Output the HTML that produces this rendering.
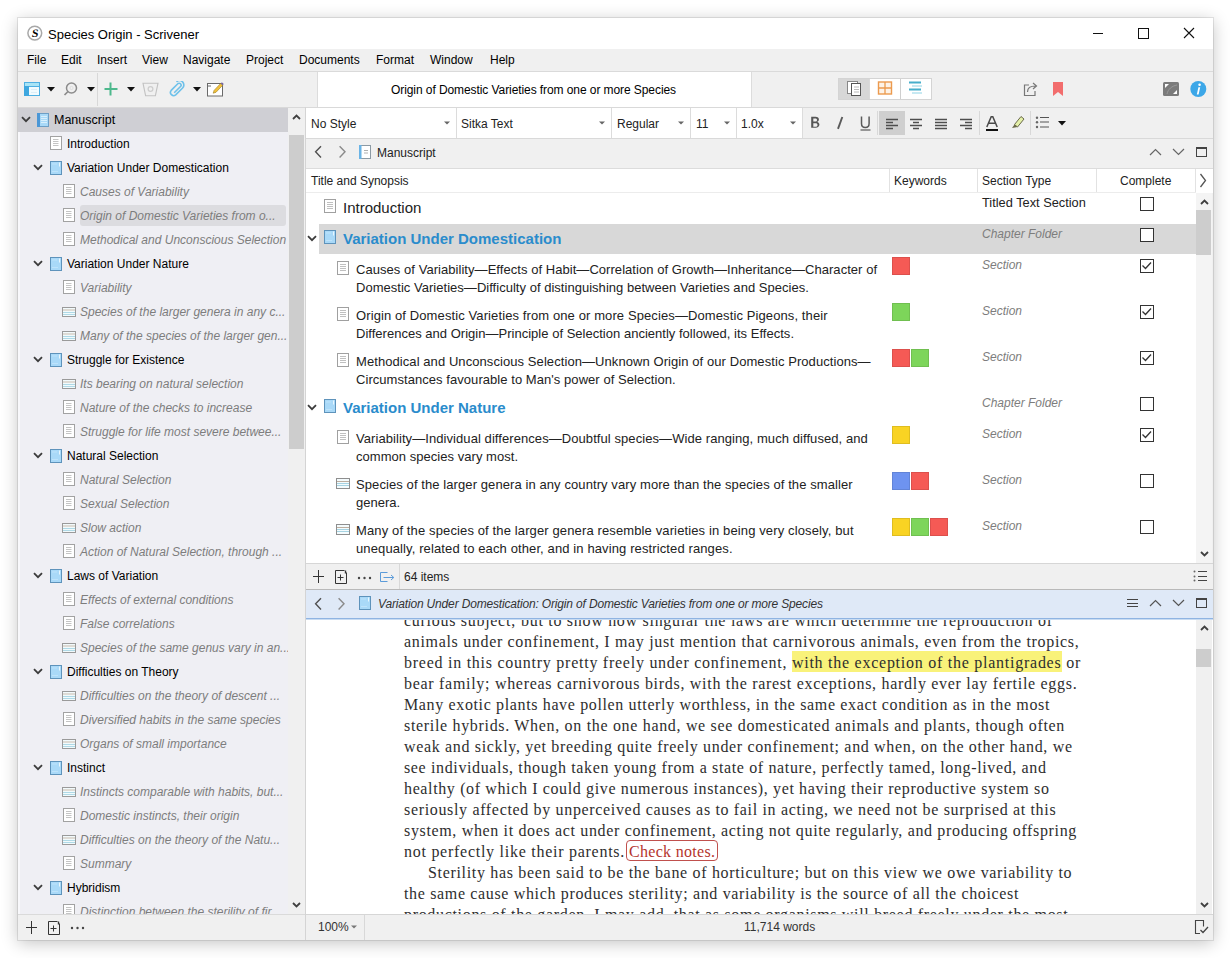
<!DOCTYPE html><html><head><meta charset="utf-8"><style>
html,body{margin:0;padding:0;width:1231px;height:958px;overflow:hidden;background:#fff;}
body{position:relative;font-family:"Liberation Sans",sans-serif;font-size:12px;color:#000;}
.t{position:absolute;white-space:pre;line-height:16px;}
.i{font-style:italic;color:#7a7a7a;}
</style></head><body>
<div style="position:absolute;left:18px;top:18px;width:1195px;height:922px;background:#f0f0f0;box-shadow:0 0 0 1px rgba(0,0,0,0.09),0 3px 16px rgba(0,0,0,0.24);"></div>
<div style="position:absolute;left:18px;top:18px;width:1195px;height:31px;background:#fff;"></div>
<svg style="position:absolute;left:27px;top:25px;" width="16" height="16" viewBox="0 0 16 16"><circle cx="7.8" cy="8.1" r="6.9" fill="#fff" stroke="#a8a8a8" stroke-width="1.5"/><text x="7.8" y="12" text-anchor="middle" font-family="Liberation Serif" font-weight="bold" font-size="11.5" fill="#000" transform="skewX(-8) translate(1.5 0)">S</text></svg>
<div class="t" style="left:48px;top:27px;font-size:13px;color:#000;">Species Origin - Scrivener</div>
<div style="position:absolute;left:1093px;top:33px;width:10px;height:1px;background:#111;"></div>
<div style="position:absolute;left:1138px;top:28px;width:9px;height:9px;border:1px solid #111;"></div>
<svg style="position:absolute;left:1183px;top:27px;" width="12" height="12" viewBox="0 0 12 12"><path d="M1 1L11 11M11 1L1 11" stroke="#111" stroke-width="1.1"/></svg>
<div style="position:absolute;left:18px;top:49px;width:1195px;height:22px;background:#f0f0f0;"></div>
<div class="t" style="left:27px;top:52px;">File</div>
<div class="t" style="left:61px;top:52px;">Edit</div>
<div class="t" style="left:97px;top:52px;">Insert</div>
<div class="t" style="left:142px;top:52px;">View</div>
<div class="t" style="left:183px;top:52px;">Navigate</div>
<div class="t" style="left:246px;top:52px;">Project</div>
<div class="t" style="left:299px;top:52px;">Documents</div>
<div class="t" style="left:376px;top:52px;">Format</div>
<div class="t" style="left:430px;top:52px;">Window</div>
<div class="t" style="left:490px;top:52px;">Help</div>
<div style="position:absolute;left:18px;top:71px;width:1195px;height:1px;background:#dadada;"></div>
<div style="position:absolute;left:18px;top:72px;width:1195px;height:35px;background:#f0f0f0;"></div>
<div style="position:absolute;left:97px;top:73px;width:1px;height:33px;background:#d8d8d8;"></div>
<div style="position:absolute;left:317px;top:72px;width:433px;height:35px;background:#fff;border-left:1px solid #dcdcdc;border-right:1px solid #dcdcdc;"></div>
<div class="t" style="left:391px;top:82px;letter-spacing:-0.08px;">Origin of Domestic Varieties from one or more Species</div>
<div style="position:absolute;left:18px;top:107px;width:1195px;height:1px;background:#d9d9d9;"></div>
<svg style="position:absolute;left:24px;top:82px;" width="16" height="14" viewBox="0 0 16 14"><rect x="0.5" y="0.5" width="15" height="13" fill="#f2fbfe" stroke="#4fb0e2"/><rect x="1" y="1" width="14" height="3" fill="#a8e4f6"/><path d="M0.5 4.5h15" stroke="#4fb0e2"/><rect x="0" y="4" width="5" height="10" fill="#3ea7df"/><path d="M7 7.5h6M7 10.5h6" stroke="#dbeef7"/></svg>
<svg style="position:absolute;left:47px;top:87px;" width="8" height="5" viewBox="0 0 8 5"><path d="M0 0h8l-4 4.5z" fill="#111"/></svg>
<svg style="position:absolute;left:63px;top:81px;" width="16" height="16" viewBox="0 0 16 16"><circle cx="8.5" cy="7" r="5" fill="none" stroke="#8c8c8c" stroke-width="1.5"/><path d="M5 10.5L1.5 14" stroke="#8c8c8c" stroke-width="1.7"/><circle cx="8.5" cy="7" r="1.6" fill="none" stroke="#d8d8d8" stroke-width="0.8"/></svg>
<svg style="position:absolute;left:87px;top:87px;" width="8" height="5" viewBox="0 0 8 5"><path d="M0 0h8l-4 4.5z" fill="#111"/></svg>
<svg style="position:absolute;left:104px;top:82px;" width="14" height="14" viewBox="0 0 14 14"><path d="M6.5 0.5v13M0.5 7h13" stroke="#4db88c" stroke-width="2"/></svg>
<svg style="position:absolute;left:127px;top:87px;" width="8" height="5" viewBox="0 0 8 5"><path d="M0 0h8l-4 4.5z" fill="#111"/></svg>
<svg style="position:absolute;left:142px;top:82px;" width="17" height="15" viewBox="0 0 17 15"><path d="M1 1.2h15l-2.6 12.5H3.6z" fill="none" stroke="#c2c2c2" stroke-width="1.1"/><circle cx="8.5" cy="7" r="2.4" fill="none" stroke="#cdcdcd" stroke-width="1.2"/></svg>
<svg style="position:absolute;left:169px;top:81px;" width="17" height="16" viewBox="0 0 17 16"><path d="M5.2 11.8l6.3-6.3a1.9 1.9 0 0 0-2.7-2.7L2.2 9.4a3.2 3.2 0 0 0 4.5 4.5l6.9-6.9a4.3 4.3 0 0 0-6.1-6.1" fill="none" stroke="#6ec1ea" stroke-width="1.6"/></svg>
<svg style="position:absolute;left:193px;top:87px;" width="8" height="5" viewBox="0 0 8 5"><path d="M0 0h8l-4 4.5z" fill="#111"/></svg>
<svg style="position:absolute;left:207px;top:81px;" width="18" height="16" viewBox="0 0 18 16"><rect x="0.5" y="2.5" width="15" height="12.5" fill="#fff" stroke="#6a6a6a"/><path d="M1 5h3" stroke="#6a6a6a" stroke-width="1"/><path d="M6.2 12.2l0.9-2.8 6.6-7 1.9 1.9-6.6 7z" fill="#f3c13a" stroke="#9a7a1a" stroke-width="0.6"/><path d="M13.7 2.4l1.2-1.2 1.9 1.9-1.2 1.2z" fill="#7a6aa0"/></svg>
<div style="position:absolute;left:838px;top:78px;width:94px;height:22px;background:#fff;border:1px solid #d4d4d4;box-sizing:border-box;"></div>
<div style="position:absolute;left:839px;top:79px;width:30px;height:20px;background:#d7d7d7;"></div>
<div style="position:absolute;left:869px;top:79px;width:1px;height:20px;background:#dadada;"></div>
<div style="position:absolute;left:900px;top:79px;width:1px;height:20px;background:#cfcfcf;"></div>
<svg style="position:absolute;left:847px;top:81px;" width="15" height="15" viewBox="0 0 15 15"><rect x="0.5" y="0.5" width="10" height="12" fill="#fff" stroke="#888"/><rect x="4.5" y="2.5" width="9" height="12" fill="#fff" stroke="#555"/><path d="M7 6h5M7 8.5h5M7 11h5" stroke="#bbb"/></svg>
<svg style="position:absolute;left:877px;top:81px;" width="16" height="14" viewBox="0 0 16 14"><rect x="1.5" y="1" width="13" height="12" fill="#fdf3e8" stroke="#ec9a4e" stroke-width="1.4"/><path d="M8 1v12M1.5 7h13" stroke="#ec9a4e" stroke-width="1.3"/></svg>
<svg style="position:absolute;left:908px;top:81px;" width="16" height="14" viewBox="0 0 16 14"><path d="M1 1.5h12M1 8.5h12" stroke="#46aecb" stroke-width="1.8"/><path d="M4 5h10M4 12h10" stroke="#8fd3e6" stroke-width="1.2"/></svg>
<svg style="position:absolute;left:1023px;top:80px;" width="17" height="17" viewBox="0 0 17 17"><path d="M6 5H1.5v10.5H12V11" fill="none" stroke="#777" stroke-width="1.2"/><path d="M4.5 12c0-4 2.5-6 8-6M10 3l3.5 3-3.5 3" fill="none" stroke="#777" stroke-width="1.2"/></svg>
<svg style="position:absolute;left:1053px;top:82px;" width="11" height="15" viewBox="0 0 11 15"><path d="M0 0h10v14l-5-4-5 4z" fill="#f26d6d"/></svg>
<svg style="position:absolute;left:1163px;top:82px;" width="16" height="14" viewBox="0 0 16 14"><rect x="0" y="0" width="16" height="14" rx="1.5" fill="#7b7b7b"/><path d="M2 2h4l-4 4z" fill="#fff"/><path d="M14 12h-4l4-4z" fill="#fff"/><path d="M4 12c1-5 5-8 10-9" fill="none" stroke="#999" stroke-width="1"/></svg>
<svg style="position:absolute;left:1190px;top:81px;" width="17" height="17" viewBox="0 0 17 17"><circle cx="8.3" cy="8" r="8" fill="#3ca7e8"/><circle cx="9.6" cy="3.8" r="1.3" fill="#fff"/><path d="M8.4 6.2h1.8l-1.6 7.2H6.8z" fill="#fff"/></svg>
<div style="position:absolute;left:18px;top:108px;width:270px;height:806px;background:#efeff4;"></div>
<div style="position:absolute;left:18px;top:108px;width:2px;height:806px;background:#f8f8fb;"></div>
<div style="position:absolute;left:18px;top:108px;width:270px;height:806px;overflow:hidden;">
<div style="position:absolute;left:0px;top:-1px;width:270px;height:25px;background:#cfcfd4;"></div>
<svg style="position:absolute;left:3px;top:8px;" width="10" height="7" viewBox="0 0 10 7"><path d="M1 1.2l4 4 4-4" fill="none" stroke="#3c3c3c" stroke-width="1.8"/></svg>
<svg style="position:absolute;left:19px;top:5px;" width="13" height="14" viewBox="0 0 13 14"><rect x="0.5" y="0.5" width="11" height="13" fill="#a9d9f7" stroke="#6e9fc5"/><rect x="0" y="0" width="3" height="14" fill="#4b97d6"/><path d="M4 3.5h6M4 5.5h6M4 7.5h6M4 9.5h6" stroke="#d8effc"/></svg>
<div class="t" style="left:36px;top:4px;font-size:12.5px;">Manuscript</div>
<svg style="position:absolute;left:32px;top:28px;" width="13" height="14" viewBox="0 0 13 14"><rect x="0.5" y="0.5" width="11" height="13" fill="#fff" stroke="#a2a2a2"/><path d="M3 3.5h5.5M3 5.5h5.5M3 7.5h5.5M3 9.5h5.5" stroke="#c4c4c4" stroke-width="1"/></svg>
<div class="t" style="left:49px;top:28px;">Introduction</div>
<svg style="position:absolute;left:15px;top:56px;" width="10" height="7" viewBox="0 0 10 7"><path d="M1 1.2l4 4 4-4" fill="none" stroke="#3c3c3c" stroke-width="1.8"/></svg>
<svg style="position:absolute;left:32px;top:53px;" width="13" height="15" viewBox="0 0 13 15"><rect x="0.5" y="0.5" width="11" height="13" fill="#a9d9f8" stroke="#5e93bb"/><path d="M9.5 1.5v4" stroke="#e8f6fe" stroke-width="1"/><path d="M2 3h5M2 10.5h6" stroke="#c4e6fb" stroke-width="0.8"/></svg>
<div class="t" style="left:49px;top:52px;">Variation Under Domestication</div>
<svg style="position:absolute;left:45px;top:76px;" width="13" height="14" viewBox="0 0 13 14"><rect x="0.5" y="0.5" width="11" height="13" fill="#fff" stroke="#a2a2a2"/><path d="M3 3.5h5.5M3 5.5h5.5M3 7.5h5.5M3 9.5h5.5" stroke="#c4c4c4" stroke-width="1"/></svg>
<div class="t" style="left:62px;top:76px;font-style:italic;color:#7d7d7d;">Causes of Variability</div>
<div style="position:absolute;left:62px;top:97px;width:206px;height:21px;background:#dcdce0;border-radius:3px;"></div>
<svg style="position:absolute;left:45px;top:100px;" width="13" height="14" viewBox="0 0 13 14"><rect x="0.5" y="0.5" width="11" height="13" fill="#fff" stroke="#a2a2a2"/><path d="M3 3.5h5.5M3 5.5h5.5M3 7.5h5.5M3 9.5h5.5" stroke="#c4c4c4" stroke-width="1"/></svg>
<div class="t" style="left:62px;top:100px;font-style:italic;color:#7d7d7d;">Origin of Domestic Varieties from o...</div>
<svg style="position:absolute;left:45px;top:124px;" width="13" height="14" viewBox="0 0 13 14"><rect x="0.5" y="0.5" width="11" height="13" fill="#fff" stroke="#a2a2a2"/><path d="M3 3.5h5.5M3 5.5h5.5M3 7.5h5.5M3 9.5h5.5" stroke="#c4c4c4" stroke-width="1"/></svg>
<div class="t" style="left:62px;top:124px;font-style:italic;color:#7d7d7d;">Methodical and Unconscious Selection</div>
<svg style="position:absolute;left:15px;top:152px;" width="10" height="7" viewBox="0 0 10 7"><path d="M1 1.2l4 4 4-4" fill="none" stroke="#3c3c3c" stroke-width="1.8"/></svg>
<svg style="position:absolute;left:32px;top:149px;" width="13" height="15" viewBox="0 0 13 15"><rect x="0.5" y="0.5" width="11" height="13" fill="#a9d9f8" stroke="#5e93bb"/><path d="M9.5 1.5v4" stroke="#e8f6fe" stroke-width="1"/><path d="M2 3h5M2 10.5h6" stroke="#c4e6fb" stroke-width="0.8"/></svg>
<div class="t" style="left:49px;top:148px;">Variation Under Nature</div>
<svg style="position:absolute;left:45px;top:172px;" width="13" height="14" viewBox="0 0 13 14"><rect x="0.5" y="0.5" width="11" height="13" fill="#fff" stroke="#a2a2a2"/><path d="M3 3.5h5.5M3 5.5h5.5M3 7.5h5.5M3 9.5h5.5" stroke="#c4c4c4" stroke-width="1"/></svg>
<div class="t" style="left:62px;top:172px;font-style:italic;color:#7d7d7d;">Variability</div>
<svg style="position:absolute;left:44px;top:199px;" width="14" height="10" viewBox="0 0 14 10"><rect x="0.5" y="0.5" width="13" height="9" fill="#f2fafc" stroke="#9a9a9a"/><path d="M1 3h12" stroke="#c9bbad"/><path d="M1 5.5h12M1 7.5h12" stroke="#afd9e6"/></svg>
<div class="t" style="left:62px;top:196px;font-style:italic;color:#7d7d7d;">Species of the larger genera in any c...</div>
<svg style="position:absolute;left:44px;top:223px;" width="14" height="10" viewBox="0 0 14 10"><rect x="0.5" y="0.5" width="13" height="9" fill="#f2fafc" stroke="#9a9a9a"/><path d="M1 3h12" stroke="#c9bbad"/><path d="M1 5.5h12M1 7.5h12" stroke="#afd9e6"/></svg>
<div class="t" style="left:62px;top:220px;font-style:italic;color:#7d7d7d;">Many of the species of the larger gen...</div>
<svg style="position:absolute;left:15px;top:248px;" width="10" height="7" viewBox="0 0 10 7"><path d="M1 1.2l4 4 4-4" fill="none" stroke="#3c3c3c" stroke-width="1.8"/></svg>
<svg style="position:absolute;left:32px;top:245px;" width="13" height="15" viewBox="0 0 13 15"><rect x="0.5" y="0.5" width="11" height="13" fill="#a9d9f8" stroke="#5e93bb"/><path d="M9.5 1.5v4" stroke="#e8f6fe" stroke-width="1"/><path d="M2 3h5M2 10.5h6" stroke="#c4e6fb" stroke-width="0.8"/></svg>
<div class="t" style="left:49px;top:244px;">Struggle for Existence</div>
<svg style="position:absolute;left:44px;top:271px;" width="14" height="10" viewBox="0 0 14 10"><rect x="0.5" y="0.5" width="13" height="9" fill="#f2fafc" stroke="#9a9a9a"/><path d="M1 3h12" stroke="#c9bbad"/><path d="M1 5.5h12M1 7.5h12" stroke="#afd9e6"/></svg>
<div class="t" style="left:62px;top:268px;font-style:italic;color:#7d7d7d;">Its bearing on natural selection</div>
<svg style="position:absolute;left:45px;top:292px;" width="13" height="14" viewBox="0 0 13 14"><rect x="0.5" y="0.5" width="11" height="13" fill="#fff" stroke="#a2a2a2"/><path d="M3 3.5h5.5M3 5.5h5.5M3 7.5h5.5M3 9.5h5.5" stroke="#c4c4c4" stroke-width="1"/></svg>
<div class="t" style="left:62px;top:292px;font-style:italic;color:#7d7d7d;">Nature of the checks to increase</div>
<svg style="position:absolute;left:45px;top:316px;" width="13" height="14" viewBox="0 0 13 14"><rect x="0.5" y="0.5" width="11" height="13" fill="#fff" stroke="#a2a2a2"/><path d="M3 3.5h5.5M3 5.5h5.5M3 7.5h5.5M3 9.5h5.5" stroke="#c4c4c4" stroke-width="1"/></svg>
<div class="t" style="left:62px;top:316px;font-style:italic;color:#7d7d7d;">Struggle for life most severe betwee...</div>
<svg style="position:absolute;left:15px;top:344px;" width="10" height="7" viewBox="0 0 10 7"><path d="M1 1.2l4 4 4-4" fill="none" stroke="#3c3c3c" stroke-width="1.8"/></svg>
<svg style="position:absolute;left:32px;top:341px;" width="13" height="15" viewBox="0 0 13 15"><rect x="0.5" y="0.5" width="11" height="13" fill="#a9d9f8" stroke="#5e93bb"/><path d="M9.5 1.5v4" stroke="#e8f6fe" stroke-width="1"/><path d="M2 3h5M2 10.5h6" stroke="#c4e6fb" stroke-width="0.8"/></svg>
<div class="t" style="left:49px;top:340px;">Natural Selection</div>
<svg style="position:absolute;left:45px;top:364px;" width="13" height="14" viewBox="0 0 13 14"><rect x="0.5" y="0.5" width="11" height="13" fill="#fff" stroke="#a2a2a2"/><path d="M3 3.5h5.5M3 5.5h5.5M3 7.5h5.5M3 9.5h5.5" stroke="#c4c4c4" stroke-width="1"/></svg>
<div class="t" style="left:62px;top:364px;font-style:italic;color:#7d7d7d;">Natural Selection</div>
<svg style="position:absolute;left:45px;top:388px;" width="13" height="14" viewBox="0 0 13 14"><rect x="0.5" y="0.5" width="11" height="13" fill="#fff" stroke="#a2a2a2"/><path d="M3 3.5h5.5M3 5.5h5.5M3 7.5h5.5M3 9.5h5.5" stroke="#c4c4c4" stroke-width="1"/></svg>
<div class="t" style="left:62px;top:388px;font-style:italic;color:#7d7d7d;">Sexual Selection</div>
<svg style="position:absolute;left:44px;top:415px;" width="14" height="10" viewBox="0 0 14 10"><rect x="0.5" y="0.5" width="13" height="9" fill="#f2fafc" stroke="#9a9a9a"/><path d="M1 3h12" stroke="#c9bbad"/><path d="M1 5.5h12M1 7.5h12" stroke="#afd9e6"/></svg>
<div class="t" style="left:62px;top:412px;font-style:italic;color:#7d7d7d;">Slow action</div>
<svg style="position:absolute;left:45px;top:436px;" width="13" height="14" viewBox="0 0 13 14"><rect x="0.5" y="0.5" width="11" height="13" fill="#fff" stroke="#a2a2a2"/><path d="M3 3.5h5.5M3 5.5h5.5M3 7.5h5.5M3 9.5h5.5" stroke="#c4c4c4" stroke-width="1"/></svg>
<div class="t" style="left:62px;top:436px;font-style:italic;color:#7d7d7d;">Action of Natural Selection, through ...</div>
<svg style="position:absolute;left:15px;top:464px;" width="10" height="7" viewBox="0 0 10 7"><path d="M1 1.2l4 4 4-4" fill="none" stroke="#3c3c3c" stroke-width="1.8"/></svg>
<svg style="position:absolute;left:32px;top:461px;" width="13" height="15" viewBox="0 0 13 15"><rect x="0.5" y="0.5" width="11" height="13" fill="#a9d9f8" stroke="#5e93bb"/><path d="M9.5 1.5v4" stroke="#e8f6fe" stroke-width="1"/><path d="M2 3h5M2 10.5h6" stroke="#c4e6fb" stroke-width="0.8"/></svg>
<div class="t" style="left:49px;top:460px;">Laws of Variation</div>
<svg style="position:absolute;left:45px;top:484px;" width="13" height="14" viewBox="0 0 13 14"><rect x="0.5" y="0.5" width="11" height="13" fill="#fff" stroke="#a2a2a2"/><path d="M3 3.5h5.5M3 5.5h5.5M3 7.5h5.5M3 9.5h5.5" stroke="#c4c4c4" stroke-width="1"/></svg>
<div class="t" style="left:62px;top:484px;font-style:italic;color:#7d7d7d;">Effects of external conditions</div>
<svg style="position:absolute;left:45px;top:508px;" width="13" height="14" viewBox="0 0 13 14"><rect x="0.5" y="0.5" width="11" height="13" fill="#fff" stroke="#a2a2a2"/><path d="M3 3.5h5.5M3 5.5h5.5M3 7.5h5.5M3 9.5h5.5" stroke="#c4c4c4" stroke-width="1"/></svg>
<div class="t" style="left:62px;top:508px;font-style:italic;color:#7d7d7d;">False correlations</div>
<svg style="position:absolute;left:44px;top:535px;" width="14" height="10" viewBox="0 0 14 10"><rect x="0.5" y="0.5" width="13" height="9" fill="#f2fafc" stroke="#9a9a9a"/><path d="M1 3h12" stroke="#c9bbad"/><path d="M1 5.5h12M1 7.5h12" stroke="#afd9e6"/></svg>
<div class="t" style="left:62px;top:532px;font-style:italic;color:#7d7d7d;">Species of the same genus vary in an...</div>
<svg style="position:absolute;left:15px;top:560px;" width="10" height="7" viewBox="0 0 10 7"><path d="M1 1.2l4 4 4-4" fill="none" stroke="#3c3c3c" stroke-width="1.8"/></svg>
<svg style="position:absolute;left:32px;top:557px;" width="13" height="15" viewBox="0 0 13 15"><rect x="0.5" y="0.5" width="11" height="13" fill="#a9d9f8" stroke="#5e93bb"/><path d="M9.5 1.5v4" stroke="#e8f6fe" stroke-width="1"/><path d="M2 3h5M2 10.5h6" stroke="#c4e6fb" stroke-width="0.8"/></svg>
<div class="t" style="left:49px;top:556px;">Difficulties on Theory</div>
<svg style="position:absolute;left:44px;top:583px;" width="14" height="10" viewBox="0 0 14 10"><rect x="0.5" y="0.5" width="13" height="9" fill="#f2fafc" stroke="#9a9a9a"/><path d="M1 3h12" stroke="#c9bbad"/><path d="M1 5.5h12M1 7.5h12" stroke="#afd9e6"/></svg>
<div class="t" style="left:62px;top:580px;font-style:italic;color:#7d7d7d;">Difficulties on the theory of descent ...</div>
<svg style="position:absolute;left:45px;top:604px;" width="13" height="14" viewBox="0 0 13 14"><rect x="0.5" y="0.5" width="11" height="13" fill="#fff" stroke="#a2a2a2"/><path d="M3 3.5h5.5M3 5.5h5.5M3 7.5h5.5M3 9.5h5.5" stroke="#c4c4c4" stroke-width="1"/></svg>
<div class="t" style="left:62px;top:604px;font-style:italic;color:#7d7d7d;">Diversified habits in the same species</div>
<svg style="position:absolute;left:44px;top:631px;" width="14" height="10" viewBox="0 0 14 10"><rect x="0.5" y="0.5" width="13" height="9" fill="#f2fafc" stroke="#9a9a9a"/><path d="M1 3h12" stroke="#c9bbad"/><path d="M1 5.5h12M1 7.5h12" stroke="#afd9e6"/></svg>
<div class="t" style="left:62px;top:628px;font-style:italic;color:#7d7d7d;">Organs of small importance</div>
<svg style="position:absolute;left:15px;top:656px;" width="10" height="7" viewBox="0 0 10 7"><path d="M1 1.2l4 4 4-4" fill="none" stroke="#3c3c3c" stroke-width="1.8"/></svg>
<svg style="position:absolute;left:32px;top:653px;" width="13" height="15" viewBox="0 0 13 15"><rect x="0.5" y="0.5" width="11" height="13" fill="#a9d9f8" stroke="#5e93bb"/><path d="M9.5 1.5v4" stroke="#e8f6fe" stroke-width="1"/><path d="M2 3h5M2 10.5h6" stroke="#c4e6fb" stroke-width="0.8"/></svg>
<div class="t" style="left:49px;top:652px;">Instinct</div>
<svg style="position:absolute;left:44px;top:679px;" width="14" height="10" viewBox="0 0 14 10"><rect x="0.5" y="0.5" width="13" height="9" fill="#f2fafc" stroke="#9a9a9a"/><path d="M1 3h12" stroke="#c9bbad"/><path d="M1 5.5h12M1 7.5h12" stroke="#afd9e6"/></svg>
<div class="t" style="left:62px;top:676px;font-style:italic;color:#7d7d7d;">Instincts comparable with habits, but...</div>
<svg style="position:absolute;left:45px;top:700px;" width="13" height="14" viewBox="0 0 13 14"><rect x="0.5" y="0.5" width="11" height="13" fill="#fff" stroke="#a2a2a2"/><path d="M3 3.5h5.5M3 5.5h5.5M3 7.5h5.5M3 9.5h5.5" stroke="#c4c4c4" stroke-width="1"/></svg>
<div class="t" style="left:62px;top:700px;font-style:italic;color:#7d7d7d;">Domestic instincts, their origin</div>
<svg style="position:absolute;left:44px;top:727px;" width="14" height="10" viewBox="0 0 14 10"><rect x="0.5" y="0.5" width="13" height="9" fill="#f2fafc" stroke="#9a9a9a"/><path d="M1 3h12" stroke="#c9bbad"/><path d="M1 5.5h12M1 7.5h12" stroke="#afd9e6"/></svg>
<div class="t" style="left:62px;top:724px;font-style:italic;color:#7d7d7d;">Difficulties on the theory of the Natu...</div>
<svg style="position:absolute;left:45px;top:748px;" width="13" height="14" viewBox="0 0 13 14"><rect x="0.5" y="0.5" width="11" height="13" fill="#fff" stroke="#a2a2a2"/><path d="M3 3.5h5.5M3 5.5h5.5M3 7.5h5.5M3 9.5h5.5" stroke="#c4c4c4" stroke-width="1"/></svg>
<div class="t" style="left:62px;top:748px;font-style:italic;color:#7d7d7d;">Summary</div>
<svg style="position:absolute;left:15px;top:776px;" width="10" height="7" viewBox="0 0 10 7"><path d="M1 1.2l4 4 4-4" fill="none" stroke="#3c3c3c" stroke-width="1.8"/></svg>
<svg style="position:absolute;left:32px;top:773px;" width="13" height="15" viewBox="0 0 13 15"><rect x="0.5" y="0.5" width="11" height="13" fill="#a9d9f8" stroke="#5e93bb"/><path d="M9.5 1.5v4" stroke="#e8f6fe" stroke-width="1"/><path d="M2 3h5M2 10.5h6" stroke="#c4e6fb" stroke-width="0.8"/></svg>
<div class="t" style="left:49px;top:772px;">Hybridism</div>
<svg style="position:absolute;left:45px;top:796px;" width="13" height="14" viewBox="0 0 13 14"><rect x="0.5" y="0.5" width="11" height="13" fill="#fff" stroke="#a2a2a2"/><path d="M3 3.5h5.5M3 5.5h5.5M3 7.5h5.5M3 9.5h5.5" stroke="#c4c4c4" stroke-width="1"/></svg>
<div class="t" style="left:62px;top:796px;font-style:italic;color:#7d7d7d;">Distinction between the sterility of fir...</div>
</div>
<div style="position:absolute;left:288px;top:108px;width:17px;height:806px;background:#f0f0f0;"></div>
<div style="position:absolute;left:289px;top:135px;width:15px;height:314px;background:#cdcdcd;"></div>
<svg style="position:absolute;left:292px;top:114px;" width="9" height="6" viewBox="0 0 9 6"><path d="M1 5l3.5-3.5L8 5" fill="none" stroke="#404040" stroke-width="1.8"/></svg>
<svg style="position:absolute;left:292px;top:902px;" width="9" height="6" viewBox="0 0 9 6"><path d="M1 1l3.5 3.5L8 1" fill="none" stroke="#404040" stroke-width="1.8"/></svg>
<div style="position:absolute;left:18px;top:914px;width:288px;height:1px;background:#dadada;"></div>
<div style="position:absolute;left:18px;top:915px;width:288px;height:25px;background:#f0f0f0;"></div>
<svg style="position:absolute;left:26px;top:921px;" width="12" height="13" viewBox="0 0 12 13"><path d="M5.5 0v13M0 6.5h11" stroke="#333" stroke-width="1"/></svg>
<svg style="position:absolute;left:48px;top:921px;" width="13" height="14" viewBox="0 0 13 14"><path d="M9.5 0.5H0.5v13h11V2.5" fill="none" stroke="#333"/><path d="M10.5 0.5v3" stroke="#333" stroke-width="1.4"/><path d="M5.5 4.5v6M2.5 7.5h6" stroke="#333"/></svg>
<svg style="position:absolute;left:70px;top:926px;" width="15" height="4" viewBox="0 0 15 4"><circle cx="2" cy="2" r="1.2" fill="#444"/><circle cx="7.5" cy="2" r="1.2" fill="#444"/><circle cx="13" cy="2" r="1.2" fill="#444"/></svg>
<div style="position:absolute;left:305px;top:107px;width:1px;height:833px;background:#d4d4d4;"></div>
<div style="position:absolute;left:306px;top:108px;width:907px;height:30px;background:#f0f0f0;"></div>
<div style="position:absolute;left:306px;top:108px;width:497px;height:30px;background:#fff;"></div>
<div style="position:absolute;left:456px;top:108px;width:1px;height:30px;background:#dcdcdc;"></div>
<div style="position:absolute;left:611px;top:108px;width:1px;height:30px;background:#dcdcdc;"></div>
<div style="position:absolute;left:690px;top:108px;width:1px;height:30px;background:#dcdcdc;"></div>
<div style="position:absolute;left:736px;top:108px;width:1px;height:30px;background:#dcdcdc;"></div>
<div style="position:absolute;left:802px;top:108px;width:1px;height:30px;background:#dcdcdc;"></div>
<div style="position:absolute;left:306px;top:138px;width:907px;height:1px;background:#d9d9d9;"></div>
<div class="t" style="left:311px;top:116px;color:#222;">No Style</div>
<svg style="position:absolute;left:444px;top:121px;" width="6" height="4" viewBox="0 0 6 4"><path d="M0 0.5h6l-3 3z" fill="#666"/></svg>
<div class="t" style="left:461px;top:116px;color:#222;">Sitka Text</div>
<svg style="position:absolute;left:599px;top:121px;" width="6" height="4" viewBox="0 0 6 4"><path d="M0 0.5h6l-3 3z" fill="#666"/></svg>
<div class="t" style="left:617px;top:116px;color:#222;">Regular</div>
<svg style="position:absolute;left:678px;top:121px;" width="6" height="4" viewBox="0 0 6 4"><path d="M0 0.5h6l-3 3z" fill="#666"/></svg>
<div class="t" style="left:696px;top:116px;color:#222;">11</div>
<svg style="position:absolute;left:724px;top:121px;" width="6" height="4" viewBox="0 0 6 4"><path d="M0 0.5h6l-3 3z" fill="#666"/></svg>
<div class="t" style="left:741px;top:116px;color:#222;">1.0x</div>
<svg style="position:absolute;left:790px;top:121px;" width="6" height="4" viewBox="0 0 6 4"><path d="M0 0.5h6l-3 3z" fill="#666"/></svg>
<svg style="position:absolute;left:810px;top:116px;" width="11" height="13" viewBox="0 0 11 13"><path d="M1.2 0.8h4.3c2.2 0 3.4 1 3.4 2.8 0 1.2-0.7 2-1.8 2.3 1.5 0.3 2.3 1.3 2.3 2.7 0 2-1.4 3.2-3.8 3.2H1.2z M3.3 2.5v3h2c1.1 0 1.7-0.5 1.7-1.5s-0.6-1.5-1.7-1.5z M3.3 7.2v3.6h2.3c1.2 0 1.9-0.6 1.9-1.8s-0.7-1.8-1.9-1.8z" fill="#565656" fill-rule="evenodd"/></svg>
<svg style="position:absolute;left:836px;top:116px;" width="8" height="14" viewBox="0 0 8 14"><path d="M6.3 1L2 12.8" stroke="#5a5a5a" stroke-width="1.9"/></svg>
<svg style="position:absolute;left:860px;top:116px;" width="11" height="16" viewBox="0 0 11 16"><path d="M1.5 0.5v7c0 2.6 1.4 4 3.8 4s3.8-1.4 3.8-4v-7" fill="none" stroke="#5a5a5a" stroke-width="1.5"/><path d="M0.5 14h10" stroke="#5a5a5a" stroke-width="1.2"/></svg>
<div style="position:absolute;left:877px;top:111px;width:1px;height:24px;background:#d8d8d8;"></div>
<div style="position:absolute;left:879px;top:111px;width:26px;height:24px;background:#cfcfcf;"></div>
<svg style="position:absolute;left:886px;top:118px;" width="13" height="12" viewBox="0 0 13 12"><path d="M0 1.5h12M0 4.5h7M0 7.5h12M0 10.5h7" stroke="#4e4e4e" stroke-width="1.3"/></svg>
<svg style="position:absolute;left:910px;top:118px;" width="13" height="12" viewBox="0 0 13 12"><path d="M0 1.5h12M3 4.5h6M0 7.5h12M3 10.5h6" stroke="#4e4e4e" stroke-width="1.3"/></svg>
<svg style="position:absolute;left:935px;top:118px;" width="13" height="12" viewBox="0 0 13 12"><path d="M0 1.5h12M0 4.5h12M0 7.5h12M0 10.5h12" stroke="#4e4e4e" stroke-width="1.3"/></svg>
<svg style="position:absolute;left:960px;top:118px;" width="13" height="12" viewBox="0 0 13 12"><path d="M0 1.5h12M5 4.5h7M0 7.5h12M5 10.5h7" stroke="#4e4e4e" stroke-width="1.3"/></svg>
<div style="position:absolute;left:979px;top:111px;width:1px;height:24px;background:#d8d8d8;"></div>
<svg style="position:absolute;left:986px;top:116px;" width="12" height="12" viewBox="0 0 12 12"><path d="M0.8 11L5.2 0.8h1.6L11.2 11M2.6 7.3h6.8" fill="none" stroke="#4a4a4a" stroke-width="1.5"/></svg>
<div style="position:absolute;left:986px;top:129px;width:12px;height:2px;background:#111;"></div>
<svg style="position:absolute;left:1011px;top:115px;" width="14" height="14" viewBox="0 0 14 14"><path d="M3.5 9.5l6.5-8 3 2.5-6.5 8z" fill="#e4f0a8" stroke="#6a6a4a" stroke-width="1"/><path d="M3.5 9.5l-2.5 3.5 3-0.5 2.5-0.5z" fill="#6a6a4a"/></svg>
<div style="position:absolute;left:1030px;top:111px;width:1px;height:24px;background:#d8d8d8;"></div>
<svg style="position:absolute;left:1035px;top:116px;" width="15" height="13" viewBox="0 0 15 13"><circle cx="2" cy="1.8" r="1.2" fill="#666"/><circle cx="2" cy="6.3" r="1.2" fill="#666"/><circle cx="2" cy="11" r="1.2" fill="#666"/><path d="M5 1.5h9M5 6h9M5 11h9" stroke="#555" stroke-width="1.2"/></svg>
<svg style="position:absolute;left:1058px;top:121px;" width="8" height="5" viewBox="0 0 8 5"><path d="M0 0h8l-4 4.5z" fill="#111"/></svg>
<div style="position:absolute;left:306px;top:139px;width:907px;height:29px;background:#f0f0f0;"></div>
<svg style="position:absolute;left:314px;top:145px;" width="9" height="14" viewBox="0 0 9 14"><path d="M7 1.2L1.6 6.8 7 12.4" fill="none" stroke="#505050" stroke-width="1.4"/></svg>
<svg style="position:absolute;left:338px;top:145px;" width="9" height="14" viewBox="0 0 9 14"><path d="M1.6 1.2L7 6.8 1.6 12.4" fill="none" stroke="#8a8a8a" stroke-width="1.4"/></svg>
<svg style="position:absolute;left:359px;top:145px;" width="13" height="15" viewBox="0 0 13 15"><rect x="0.5" y="0.5" width="11" height="13" fill="#fff" stroke="#8c9aa4"/><rect x="0" y="0" width="2.5" height="14" fill="#6ab4e6"/><path d="M5 5.5h4M5 8h4" stroke="#b0b0b0"/></svg>
<div class="t" style="left:377px;top:145px;color:#222;">Manuscript</div>
<svg style="position:absolute;left:1149px;top:148px;" width="13" height="8" viewBox="0 0 13 8"><path d="M1 7l5.5-5.5L12 7" fill="none" stroke="#666" stroke-width="1.2"/></svg>
<svg style="position:absolute;left:1172px;top:148px;" width="13" height="8" viewBox="0 0 13 8"><path d="M1 1l5.5 5.5L12 1" fill="none" stroke="#666" stroke-width="1.2"/></svg>
<div style="position:absolute;left:1196px;top:147px;width:11px;height:10px;border:1px solid #444;box-sizing:border-box;border-top-width:2px;"></div>
<div style="position:absolute;left:306px;top:168px;width:907px;height:1px;background:#dcdcdc;"></div>
<div style="position:absolute;left:306px;top:169px;width:907px;height:24px;background:#fff;"></div>
<div class="t" style="left:311px;top:173px;color:#222;">Title and Synopsis</div>
<div style="position:absolute;left:889px;top:169px;width:1px;height:24px;background:#e2e2e2;"></div>
<div style="position:absolute;left:977px;top:169px;width:1px;height:24px;background:#e2e2e2;"></div>
<div style="position:absolute;left:1096px;top:169px;width:1px;height:24px;background:#e2e2e2;"></div>
<div style="position:absolute;left:1195px;top:169px;width:1px;height:24px;background:#e2e2e2;"></div>
<div class="t" style="left:894px;top:173px;color:#222;">Keywords</div>
<div class="t" style="left:982px;top:173px;color:#222;">Section Type</div>
<div class="t" style="left:1120px;top:173px;color:#222;">Complete</div>
<svg style="position:absolute;left:1199px;top:173px;" width="8" height="15" viewBox="0 0 8 15"><path d="M1.5 1l5 6.5-5 6.5" fill="none" stroke="#555" stroke-width="1.3"/></svg>
<div style="position:absolute;left:306px;top:192px;width:890px;height:1px;background:#ececec;"></div>
<div style="position:absolute;left:306px;top:193px;width:890px;height:370px;background:#fff;"></div>
<svg style="position:absolute;left:324px;top:199px;" width="13" height="14" viewBox="0 0 13 14"><rect x="0.5" y="0.5" width="11" height="13" fill="#fff" stroke="#a0a0a0"/><path d="M3 3.5h6M3 5.5h6M3 7.5h6M3 9.5h6" stroke="#c0c0c0"/></svg>
<div class="t" style="left:343px;top:199px;font-size:15px;line-height:18px;color:#222;">Introduction</div>
<div class="t" style="left:982px;top:195px;font-size:12.8px;color:#222;">Titled Text Section</div>
<svg style="position:absolute;left:1140px;top:197px;" width="14" height="14" viewBox="0 0 14 14"><rect x="0.5" y="0.5" width="13" height="13" fill="#fff" stroke="#333"/></svg>
<div style="position:absolute;left:319px;top:224px;width:877px;height:30px;background:#d8d8d8;"></div>
<svg style="position:absolute;left:307px;top:235px;" width="10" height="7" viewBox="0 0 10 7"><path d="M1 1.2l4 4 4-4" fill="none" stroke="#3c3c3c" stroke-width="1.8"/></svg>
<svg style="position:absolute;left:324px;top:230px;" width="13" height="15" viewBox="0 0 13 15"><rect x="0.5" y="0.5" width="11" height="13" fill="#a9d9f8" stroke="#5e93bb"/><path d="M9.5 1.5v4" stroke="#e8f6fe" stroke-width="1"/><path d="M2 3h5M2 10.5h6" stroke="#c4e6fb" stroke-width="0.8"/></svg>
<div class="t" style="left:343px;top:230px;font-size:15px;line-height:18px;font-weight:bold;color:#2a8ccc;">Variation Under Domestication</div>
<div class="t" style="left:982px;top:226px;font-style:italic;color:#7d7d7d;">Chapter Folder</div>
<svg style="position:absolute;left:1140px;top:228px;" width="14" height="14" viewBox="0 0 14 14"><rect x="0.5" y="0.5" width="13" height="13" fill="#fff" stroke="#333"/></svg>
<svg style="position:absolute;left:337px;top:261px;" width="13" height="14" viewBox="0 0 13 14"><rect x="0.5" y="0.5" width="11" height="13" fill="#fff" stroke="#a0a0a0"/><path d="M3 3.5h6M3 5.5h6M3 7.5h6M3 9.5h6" stroke="#c0c0c0"/></svg>
<div class="t" style="left:356px;top:262px;font-size:13px;color:#222;line-height:16px;letter-spacing:0.05px;">Causes of Variability—Effects of Habit—Correlation of Growth—Inheritance—Character of</div>
<div class="t" style="left:356px;top:280px;font-size:13px;color:#222;line-height:16px;letter-spacing:0.025px;">Domestic Varieties—Difficulty of distinguishing between Varieties and Species.</div>
<div style="position:absolute;left:892px;top:257px;width:18px;height:18px;background:#f55a55;box-shadow:inset 0 0 0 1px rgba(0,0,0,0.1);"></div>
<div class="t" style="left:982px;top:257px;font-style:italic;color:#7d7d7d;">Section</div>
<svg style="position:absolute;left:1140px;top:259px;" width="14" height="14" viewBox="0 0 14 14"><rect x="0.5" y="0.5" width="13" height="13" fill="#fff" stroke="#333"/><path d="M2.5 6.5l3 3 5.5-6" fill="none" stroke="#333" stroke-width="1.3"/></svg>
<svg style="position:absolute;left:337px;top:307px;" width="13" height="14" viewBox="0 0 13 14"><rect x="0.5" y="0.5" width="11" height="13" fill="#fff" stroke="#a0a0a0"/><path d="M3 3.5h6M3 5.5h6M3 7.5h6M3 9.5h6" stroke="#c0c0c0"/></svg>
<div class="t" style="left:356px;top:308px;font-size:13px;color:#222;line-height:16px;letter-spacing:0.105px;">Origin of Domestic Varieties from one or more Species—Domestic Pigeons, their</div>
<div class="t" style="left:356px;top:326px;font-size:13px;color:#222;line-height:16px;letter-spacing:0.017px;">Differences and Origin—Principle of Selection anciently followed, its Effects.</div>
<div style="position:absolute;left:892px;top:303px;width:18px;height:18px;background:#7dd55a;box-shadow:inset 0 0 0 1px rgba(0,0,0,0.1);"></div>
<div class="t" style="left:982px;top:303px;font-style:italic;color:#7d7d7d;">Section</div>
<svg style="position:absolute;left:1140px;top:305px;" width="14" height="14" viewBox="0 0 14 14"><rect x="0.5" y="0.5" width="13" height="13" fill="#fff" stroke="#333"/><path d="M2.5 6.5l3 3 5.5-6" fill="none" stroke="#333" stroke-width="1.3"/></svg>
<svg style="position:absolute;left:337px;top:353px;" width="13" height="14" viewBox="0 0 13 14"><rect x="0.5" y="0.5" width="11" height="13" fill="#fff" stroke="#a0a0a0"/><path d="M3 3.5h6M3 5.5h6M3 7.5h6M3 9.5h6" stroke="#c0c0c0"/></svg>
<div class="t" style="left:356px;top:354px;font-size:13px;color:#222;line-height:16px;letter-spacing:0.075px;">Methodical and Unconscious Selection—Unknown Origin of our Domestic Productions—</div>
<div class="t" style="left:356px;top:372px;font-size:13px;color:#222;line-height:16px;letter-spacing:0.054px;">Circumstances favourable to Man's power of Selection.</div>
<div style="position:absolute;left:892px;top:349px;width:18px;height:18px;background:#f55a55;box-shadow:inset 0 0 0 1px rgba(0,0,0,0.1);"></div>
<div style="position:absolute;left:911px;top:349px;width:18px;height:18px;background:#7dd55a;box-shadow:inset 0 0 0 1px rgba(0,0,0,0.1);"></div>
<div class="t" style="left:982px;top:349px;font-style:italic;color:#7d7d7d;">Section</div>
<svg style="position:absolute;left:1140px;top:351px;" width="14" height="14" viewBox="0 0 14 14"><rect x="0.5" y="0.5" width="13" height="13" fill="#fff" stroke="#333"/><path d="M2.5 6.5l3 3 5.5-6" fill="none" stroke="#333" stroke-width="1.3"/></svg>
<svg style="position:absolute;left:307px;top:404px;" width="10" height="7" viewBox="0 0 10 7"><path d="M1 1.2l4 4 4-4" fill="none" stroke="#3c3c3c" stroke-width="1.8"/></svg>
<svg style="position:absolute;left:324px;top:399px;" width="13" height="15" viewBox="0 0 13 15"><rect x="0.5" y="0.5" width="11" height="13" fill="#a9d9f8" stroke="#5e93bb"/><path d="M9.5 1.5v4" stroke="#e8f6fe" stroke-width="1"/><path d="M2 3h5M2 10.5h6" stroke="#c4e6fb" stroke-width="0.8"/></svg>
<div class="t" style="left:343px;top:399px;font-size:15px;line-height:18px;font-weight:bold;color:#2a8ccc;">Variation Under Nature</div>
<div class="t" style="left:982px;top:395px;font-style:italic;color:#7d7d7d;">Chapter Folder</div>
<svg style="position:absolute;left:1140px;top:397px;" width="14" height="14" viewBox="0 0 14 14"><rect x="0.5" y="0.5" width="13" height="13" fill="#fff" stroke="#333"/></svg>
<svg style="position:absolute;left:337px;top:430px;" width="13" height="14" viewBox="0 0 13 14"><rect x="0.5" y="0.5" width="11" height="13" fill="#fff" stroke="#a0a0a0"/><path d="M3 3.5h6M3 5.5h6M3 7.5h6M3 9.5h6" stroke="#c0c0c0"/></svg>
<div class="t" style="left:356px;top:431px;font-size:13px;color:#222;line-height:16px;letter-spacing:0.072px;">Variability—Individual differences—Doubtful species—Wide ranging, much diffused, and</div>
<div class="t" style="left:356px;top:449px;font-size:13px;color:#222;line-height:16px;letter-spacing:0.04px;">common species vary most.</div>
<div style="position:absolute;left:892px;top:426px;width:18px;height:18px;background:#f9d323;box-shadow:inset 0 0 0 1px rgba(0,0,0,0.1);"></div>
<div class="t" style="left:982px;top:426px;font-style:italic;color:#7d7d7d;">Section</div>
<svg style="position:absolute;left:1140px;top:428px;" width="14" height="14" viewBox="0 0 14 14"><rect x="0.5" y="0.5" width="13" height="13" fill="#fff" stroke="#333"/><path d="M2.5 6.5l3 3 5.5-6" fill="none" stroke="#333" stroke-width="1.3"/></svg>
<svg style="position:absolute;left:336px;top:478px;" width="14" height="11" viewBox="0 0 14 11"><rect x="0.5" y="0.5" width="13" height="10" fill="#f4fbfd" stroke="#8e8e8e"/><path d="M1 3.5h12" stroke="#bcaea0"/><path d="M1 5.5h12M1 7.5h12" stroke="#a6d3e2"/></svg>
<div class="t" style="left:356px;top:477px;font-size:13px;color:#222;line-height:16px;letter-spacing:0.088px;">Species of the larger genera in any country vary more than the species of the smaller</div>
<div class="t" style="left:356px;top:495px;font-size:13px;color:#222;line-height:16px;letter-spacing:0px;">genera.</div>
<div style="position:absolute;left:892px;top:472px;width:18px;height:18px;background:#6e93f0;box-shadow:inset 0 0 0 1px rgba(0,0,0,0.1);"></div>
<div style="position:absolute;left:911px;top:472px;width:18px;height:18px;background:#f55a55;box-shadow:inset 0 0 0 1px rgba(0,0,0,0.1);"></div>
<div class="t" style="left:982px;top:472px;font-style:italic;color:#7d7d7d;">Section</div>
<svg style="position:absolute;left:1140px;top:474px;" width="14" height="14" viewBox="0 0 14 14"><rect x="0.5" y="0.5" width="13" height="13" fill="#fff" stroke="#333"/></svg>
<svg style="position:absolute;left:336px;top:524px;" width="14" height="11" viewBox="0 0 14 11"><rect x="0.5" y="0.5" width="13" height="10" fill="#f4fbfd" stroke="#8e8e8e"/><path d="M1 3.5h12" stroke="#bcaea0"/><path d="M1 5.5h12M1 7.5h12" stroke="#a6d3e2"/></svg>
<div class="t" style="left:356px;top:523px;font-size:13px;color:#222;line-height:16px;letter-spacing:0.126px;">Many of the species of the larger genera resemble varieties in being very closely, but</div>
<div class="t" style="left:356px;top:541px;font-size:13px;color:#222;line-height:16px;letter-spacing:0.115px;">unequally, related to each other, and in having restricted ranges.</div>
<div style="position:absolute;left:892px;top:518px;width:18px;height:18px;background:#f9d323;box-shadow:inset 0 0 0 1px rgba(0,0,0,0.1);"></div>
<div style="position:absolute;left:911px;top:518px;width:18px;height:18px;background:#7dd55a;box-shadow:inset 0 0 0 1px rgba(0,0,0,0.1);"></div>
<div style="position:absolute;left:930px;top:518px;width:18px;height:18px;background:#f55a55;box-shadow:inset 0 0 0 1px rgba(0,0,0,0.1);"></div>
<div class="t" style="left:982px;top:518px;font-style:italic;color:#7d7d7d;">Section</div>
<svg style="position:absolute;left:1140px;top:520px;" width="14" height="14" viewBox="0 0 14 14"><rect x="0.5" y="0.5" width="13" height="13" fill="#fff" stroke="#333"/></svg>
<div style="position:absolute;left:1196px;top:193px;width:16px;height:370px;background:#f4f4f4;"></div>
<div style="position:absolute;left:1196px;top:210px;width:15px;height:45px;background:#cdcdcd;"></div>
<svg style="position:absolute;left:1200px;top:199px;" width="9" height="6" viewBox="0 0 9 6"><path d="M1 5l3.5-3.5L8 5" fill="none" stroke="#404040" stroke-width="1.8"/></svg>
<svg style="position:absolute;left:1200px;top:551px;" width="9" height="6" viewBox="0 0 9 6"><path d="M1 1l3.5 3.5L8 1" fill="none" stroke="#404040" stroke-width="1.8"/></svg>
<div style="position:absolute;left:306px;top:563px;width:907px;height:1px;background:#d6d6d6;"></div>
<div style="position:absolute;left:306px;top:564px;width:907px;height:25px;background:#f0f0f0;"></div>
<svg style="position:absolute;left:313px;top:570px;" width="12" height="13" viewBox="0 0 12 13"><path d="M5.5 0v13M0 6.5h11" stroke="#333" stroke-width="1"/></svg>
<svg style="position:absolute;left:335px;top:570px;" width="13" height="14" viewBox="0 0 13 14"><path d="M9.5 0.5H0.5v13h11V2.5" fill="none" stroke="#333"/><path d="M10.5 0.5v3" stroke="#333" stroke-width="1.4"/><path d="M5.5 4.5v6M2.5 7.5h6" stroke="#333"/></svg>
<svg style="position:absolute;left:357px;top:576px;" width="15" height="4" viewBox="0 0 15 4"><circle cx="2" cy="2" r="1.2" fill="#444"/><circle cx="7.5" cy="2" r="1.2" fill="#444"/><circle cx="13" cy="2" r="1.2" fill="#444"/></svg>
<svg style="position:absolute;left:380px;top:572px;" width="15" height="11" viewBox="0 0 15 11"><path d="M7.5 0.5H0.5v9h7" fill="none" stroke="#5b9bd9"/><path d="M3.5 5.5h10M11 3l2.8 2.5L11 8" fill="none" stroke="#5b9bd9"/></svg>
<div style="position:absolute;left:399px;top:564px;width:1px;height:25px;background:#d8d8d8;"></div>
<div class="t" style="left:404px;top:569px;color:#222;">64 items</div>
<svg style="position:absolute;left:1193px;top:570px;" width="15" height="13" viewBox="0 0 15 13"><circle cx="1.5" cy="1.5" r="1" fill="#666"/><circle cx="1.5" cy="6.5" r="1" fill="#666"/><circle cx="1.5" cy="10.5" r="1" fill="#666"/><path d="M5 1.5h9M5 6.5h9M5 10.5h9" stroke="#444"/></svg>
<div style="position:absolute;left:306px;top:589px;width:907px;height:1px;background:#b9b9b9;"></div>
<div style="position:absolute;left:306px;top:590px;width:907px;height:28px;background:#dfe9f7;"></div>
<div style="position:absolute;left:306px;top:618px;width:907px;height:1px;background:#8fb4e2;"></div>
<div style="position:absolute;left:306px;top:619px;width:907px;height:1px;background:#c9dcf2;"></div>
<svg style="position:absolute;left:314px;top:597px;" width="9" height="14" viewBox="0 0 9 14"><path d="M7 1.2L1.6 6.8 7 12.4" fill="none" stroke="#505050" stroke-width="1.4"/></svg>
<svg style="position:absolute;left:337px;top:597px;" width="9" height="14" viewBox="0 0 9 14"><path d="M1.6 1.2L7 6.8 1.6 12.4" fill="none" stroke="#8a8a8a" stroke-width="1.4"/></svg>
<svg style="position:absolute;left:359px;top:596px;" width="13" height="15" viewBox="0 0 13 15"><rect x="0.5" y="0.5" width="11" height="13" fill="#a9d9f8" stroke="#5e93bb"/><path d="M9.5 1.5v4" stroke="#e8f6fe" stroke-width="1"/><path d="M2 3h5M2 10.5h6" stroke="#c4e6fb" stroke-width="0.8"/></svg>
<div class="t" style="left:378px;top:596px;font-style:italic;color:#333;letter-spacing:-0.165px;">Variation Under Domestication: Origin of Domestic Varieties from one or more Species</div>
<svg style="position:absolute;left:1127px;top:598px;" width="12" height="10" viewBox="0 0 12 10"><path d="M0 1.5h11M0 5.5h11M0 8.5h11" stroke="#444" stroke-width="1"/></svg>
<svg style="position:absolute;left:1149px;top:599px;" width="13" height="8" viewBox="0 0 13 8"><path d="M1 7l5.5-5.5L12 7" fill="none" stroke="#555" stroke-width="1.2"/></svg>
<svg style="position:absolute;left:1172px;top:599px;" width="13" height="8" viewBox="0 0 13 8"><path d="M1 1l5.5 5.5L12 1" fill="none" stroke="#555" stroke-width="1.2"/></svg>
<div style="position:absolute;left:1196px;top:598px;width:11px;height:10px;border:1px solid #444;box-sizing:border-box;border-top-width:2px;"></div>
<div style="position:absolute;left:306px;top:620px;width:907px;height:294px;background:#fff;"></div>
<div style="position:absolute;left:306px;top:620px;width:890px;height:294px;overflow:hidden;">
<div style="position:absolute;left:486px;top:31px;width:270px;height:21px;background:#f9f27a;"></div>
<div class="t" style="left:98px;top:-10px;font-family:'Liberation Serif',serif;font-size:16px;line-height:21px;letter-spacing:0.711px;color:#2e2e2e;">curious subject; but to show how singular the laws are which determine the reproduction of</div>
<div class="t" style="left:98px;top:11px;font-family:'Liberation Serif',serif;font-size:16px;line-height:21px;letter-spacing:0.671px;color:#2e2e2e;">animals under confinement, I may just mention that carnivorous animals, even from the tropics,</div>
<div class="t" style="left:98px;top:32px;font-family:'Liberation Serif',serif;font-size:16px;line-height:21px;letter-spacing:0.744px;color:#2e2e2e;">breed in this country pretty freely under confinement, with the exception of the plantigrades or</div>
<div class="t" style="left:98px;top:53px;font-family:'Liberation Serif',serif;font-size:16px;line-height:21px;letter-spacing:0.704px;color:#2e2e2e;">bear family; whereas carnivorous birds, with the rarest exceptions, hardly ever lay fertile eggs.</div>
<div class="t" style="left:98px;top:74px;font-family:'Liberation Serif',serif;font-size:16px;line-height:21px;letter-spacing:0.637px;color:#2e2e2e;">Many exotic plants have pollen utterly worthless, in the same exact condition as in the most</div>
<div class="t" style="left:98px;top:95px;font-family:'Liberation Serif',serif;font-size:16px;line-height:21px;letter-spacing:0.678px;color:#2e2e2e;">sterile hybrids. When, on the one hand, we see domesticated animals and plants, though often</div>
<div class="t" style="left:98px;top:116px;font-family:'Liberation Serif',serif;font-size:16px;line-height:21px;letter-spacing:0.656px;color:#2e2e2e;">weak and sickly, yet breeding quite freely under confinement; and when, on the other hand, we</div>
<div class="t" style="left:98px;top:137px;font-family:'Liberation Serif',serif;font-size:16px;line-height:21px;letter-spacing:0.634px;color:#2e2e2e;">see individuals, though taken young from a state of nature, perfectly tamed, long-lived, and</div>
<div class="t" style="left:98px;top:158px;font-family:'Liberation Serif',serif;font-size:16px;line-height:21px;letter-spacing:0.629px;color:#2e2e2e;">healthy (of which I could give numerous instances), yet having their reproductive system so</div>
<div class="t" style="left:98px;top:179px;font-family:'Liberation Serif',serif;font-size:16px;line-height:21px;letter-spacing:0.663px;color:#2e2e2e;">seriously affected by unperceived causes as to fail in acting, we need not be surprised at this</div>
<div class="t" style="left:98px;top:200px;font-family:'Liberation Serif',serif;font-size:16px;line-height:21px;letter-spacing:0.653px;color:#2e2e2e;">system, when it does act under confinement, acting not quite regularly, and producing offspring</div>
<div class="t" style="left:98px;top:221px;font-family:'Liberation Serif',serif;font-size:16px;line-height:21px;letter-spacing:0.734px;color:#2e2e2e;">not perfectly like their parents.</div>
<div style="position:absolute;left:320px;top:220px;width:92px;height:21px;border:1px solid #c0504d;border-radius:4px;box-sizing:border-box;"></div>
<div class="t" style="left:323px;top:221px;font-family:'Liberation Serif',serif;font-size:16px;line-height:21px;letter-spacing:0.3px;color:#b5352c;">Check notes.</div>
<div class="t" style="left:122px;top:242px;font-family:'Liberation Serif',serif;font-size:16px;line-height:21px;letter-spacing:0.676px;color:#2e2e2e;">Sterility has been said to be the bane of horticulture; but on this view we owe variability to</div>
<div class="t" style="left:98px;top:263px;font-family:'Liberation Serif',serif;font-size:16px;line-height:21px;letter-spacing:0.653px;color:#2e2e2e;">the same cause which produces sterility; and variability is the source of all the choicest</div>
<div class="t" style="left:98px;top:284px;font-family:'Liberation Serif',serif;font-size:16px;line-height:21px;letter-spacing:0.678px;color:#2e2e2e;">productions of the garden. I may add, that as some organisms will breed freely under the most</div>
</div>
<div style="position:absolute;left:1196px;top:620px;width:16px;height:294px;background:#f0f0f0;"></div>
<div style="position:absolute;left:1196px;top:649px;width:15px;height:18px;background:#cdcdcd;"></div>
<svg style="position:absolute;left:1200px;top:625px;" width="9" height="6" viewBox="0 0 9 6"><path d="M1 5l3.5-3.5L8 5" fill="none" stroke="#404040" stroke-width="1.8"/></svg>
<svg style="position:absolute;left:1200px;top:902px;" width="9" height="6" viewBox="0 0 9 6"><path d="M1 1l3.5 3.5L8 1" fill="none" stroke="#404040" stroke-width="1.8"/></svg>
<div style="position:absolute;left:306px;top:914px;width:907px;height:1px;background:#d6d6d6;"></div>
<div style="position:absolute;left:306px;top:915px;width:907px;height:25px;background:#f0f0f0;"></div>
<div class="t" style="left:318px;top:919px;color:#333;">100%</div>
<svg style="position:absolute;left:351px;top:925px;" width="6" height="4" viewBox="0 0 6 4"><path d="M0 0.5h6l-3 3z" fill="#777"/></svg>
<div style="position:absolute;left:364px;top:915px;width:1px;height:25px;background:#d8d8d8;"></div>
<div class="t" style="left:744px;top:919px;color:#333;">11,714 words</div>
<svg style="position:absolute;left:1194px;top:919px;" width="16" height="16" viewBox="0 0 16 16"><path d="M6 14.5H1.5V1.5h8v6" fill="none" stroke="#444" stroke-width="1.1"/><path d="M6.5 11l2.5 2.5 5-5.5" fill="none" stroke="#444" stroke-width="1.3"/></svg>
</body></html>
